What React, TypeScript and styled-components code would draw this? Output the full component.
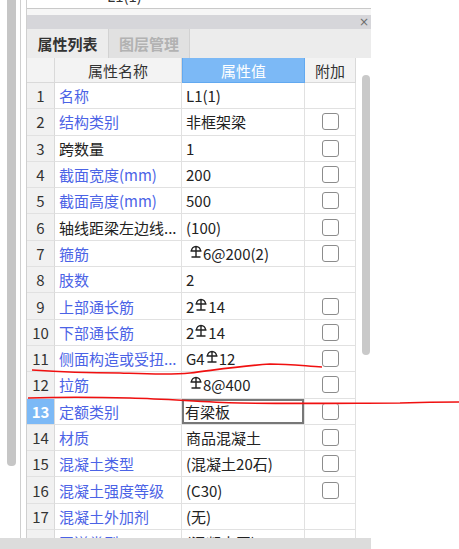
import React from 'react';
import styled, { createGlobalStyle } from 'styled-components';

const GlobalStyle = createGlobalStyle`
  html, body {
    margin: 0;
    padding: 0;
    background: #fff;
  }
  * {
    box-sizing: border-box;
  }
`;

const FONT = `"Microsoft YaHei", "Noto Sans CJK SC", "Noto Sans", sans-serif`;
const BLUE = '#4b63e6';
const GRID = '#e1e1e1';

const Root = styled.div`
  position: relative;
  width: 459px;
  height: 549px;
  overflow: hidden;
  display: flex;
  flex-direction: column;
  font-family: ${FONT};
  background: #fff;
`;

const Body = styled.div`
  display: flex;
  height: 538px;
`;

const LeftTrack = styled.div`
  width: 20px;
  padding-left: 7px;
`;

const LeftThumb = styled.div`
  width: 9px;
  height: 466px;
  background: #c6c6c6;
  border-radius: 0 0 4px 4px;
`;

const Divider = styled.div`
  width: 6px;
  border-left: 1px solid #cfcfcf;
`;

const Panel = styled.div`
  width: 345px;
  border-left: 1px solid #cfcfcf;
  display: flex;
  flex-direction: column;
  overflow: hidden;
`;

const TopBox = styled.div`
  height: 9px;
  background: #fff;
  border-bottom: 1px solid #c9c9c9;
  overflow: hidden;
  padding-left: 80px;
  font-size: 15px;
  color: #333;
  line-height: 15px;
`;

const TopText = styled.div`
  margin-top: -12px;
`;

const Spacer = styled.div`
  height: 6px;
  background: #f6f6f6;
`;

const PanelHeader = styled.div`
  height: 14px;
  background: #d6d6da;
  display: flex;
  justify-content: flex-end;
  align-items: center;
  padding-right: 2px;
`;

const CloseMark = styled.span`
  font-family: "DejaVu Sans", sans-serif;
  font-size: 12px;
  line-height: 12px;
  color: #6d6d6d;
`;

const TabBar = styled.div`
  height: 29px;
  background: #ececec;
  display: flex;
`;

const Tab = styled.div<{ $active?: boolean }>`
  width: ${(p) => (p.$active ? 81 : 82)}px;
  display: flex;
  align-items: center;
  justify-content: center;
  font-size: 15px;
  font-weight: 700;
  color: ${(p) => (p.$active ? '#333' : '#b2b2b2')};
  background: ${(p) => (p.$active ? '#ececec' : '#e1e1e1')};
  border-left: ${(p) => (p.$active ? 'none' : '1px solid #d2d2d2')};
  border-right: ${(p) => (p.$active ? 'none' : '1px solid #d2d2d2')};
`;

const TableArea = styled.div`
  display: flex;
  flex: 1;
  overflow: hidden;
`;

const Grid = styled.div`
  width: 329px;
  display: grid;
  grid-template-columns: 28px 127px 123px 51px;
  grid-template-rows: 25px;
  grid-auto-rows: 26.3px;
  align-content: start;
  background: #fff;
`;

const HeadCell = styled.div<{ $accent?: boolean }>`
  display: flex;
  align-items: center;
  justify-content: center;
  font-size: 15px;
  color: ${(p) => (p.$accent ? '#fff' : '#333')};
  background: ${(p) => (p.$accent ? '#7cb9f6' : '#f3f3f3')};
  border-right: 1px solid ${(p) => (p.$accent ? '#62a9f0' : '#d9d9d9')};
  border-bottom: 1px solid ${(p) => (p.$accent ? '#62a9f0' : '#d9d9d9')};
  border-left: ${(p) => (p.$accent ? '1px solid #62a9f0' : 'none')};
`;

const NumCell = styled.div<{ $selected?: boolean }>`
  display: flex;
  align-items: center;
  justify-content: center;
  font-size: 15px;
  font-weight: ${(p) => (p.$selected ? 700 : 400)};
  color: ${(p) => (p.$selected ? '#fff' : '#333')};
  background: ${(p) => (p.$selected ? '#7cb9f6' : '#f1f1f1')};
  border-right: 1px solid #d9d9d9;
  border-bottom: 1px solid ${GRID};
`;

const NameCell = styled.div<{ $blue?: boolean }>`
  display: flex;
  align-items: center;
  padding-left: 4px;
  font-size: 15px;
  color: ${(p) => (p.$blue ? BLUE : '#222')};
  white-space: nowrap;
  overflow: hidden;
  border-right: 1px solid ${GRID};
  border-bottom: 1px solid ${GRID};
`;

const ValueCell = styled.div<{ $editing?: boolean }>`
  display: flex;
  align-items: center;
  padding-left: ${(p) => (p.$editing ? 3 : 4)}px;
  font-size: 15px;
  color: #222;
  white-space: nowrap;
  border-right: 1px solid ${GRID};
  border-bottom: 1px solid ${GRID};
  ${(p) => (p.$editing ? 'box-shadow: inset 0 0 0 2px #777;' : '')}
`;

const ExtraCell = styled.div`
  display: flex;
  align-items: center;
  justify-content: center;
  border-right: 1px solid ${GRID};
  border-bottom: 1px solid ${GRID};
`;

const Check = styled.div`
  width: 17px;
  height: 17px;
  border: 1.5px solid #8c8c8c;
  border-radius: 3px;
  background: #fff;
`;

const ScrollCol = styled.div`
  width: 15px;
  padding: 17px 1px 0 6px;
  background: #fff;
`;

const ScrollThumb = styled.div`
  height: 280px;
  border-radius: 4px;
  background: #c9c9c9;
`;

const BottomBar = styled.div`
  width: 371px;
  height: 11px;
  background: #dcdcdc;
`;

const Annotation = styled.svg`
  position: absolute;
  left: 0;
  top: 0;
  pointer-events: none;
`;

const Glyph = styled.svg<{ $lead?: boolean }>`
  width: 12px;
  height: 13px;
  margin: ${(p) => (p.$lead ? '0 1px 0 4px' : '0 1px 0 1px')};
  position: relative;
  top: -2px;
`;

const Rebar = ({ lead }: { lead?: boolean }) => (
  <Glyph $lead={lead} viewBox="0 0 12 13">
    <path
      d="M1.5 6 A4.5 4.5 0 0 1 10.5 6 M0.5 6 H11.5 M6 1.5 V12.5 M1.5 12 H10.5"
      fill="none"
      stroke="#222"
      strokeWidth="1.4"
    />
  </Glyph>
);

interface Row {
  name: string;
  blue: boolean;
  value: string;
  check: boolean;
}

// '#' marks the rebar grade symbol
const rows: Row[] = [
  { name: '名称', blue: true, value: 'L1(1)', check: false },
  { name: '结构类别', blue: true, value: '非框架梁', check: true },
  { name: '跨数量', blue: false, value: '1', check: true },
  { name: '截面宽度(mm)', blue: true, value: '200', check: true },
  { name: '截面高度(mm)', blue: true, value: '500', check: true },
  { name: '轴线距梁左边线...', blue: false, value: '(100)', check: true },
  { name: '箍筋', blue: true, value: '#6@200(2)', check: true },
  { name: '肢数', blue: true, value: '2', check: false },
  { name: '上部通长筋', blue: true, value: '2#14', check: true },
  { name: '下部通长筋', blue: true, value: '2#14', check: true },
  { name: '侧面构造或受扭...', blue: true, value: 'G4#12', check: true },
  { name: '拉筋', blue: true, value: '#8@400', check: true },
  { name: '定额类别', blue: true, value: '有梁板', check: true },
  { name: '材质', blue: true, value: '商品混凝土', check: true },
  { name: '混凝土类型', blue: true, value: '(混凝土20石)', check: true },
  { name: '混凝土强度等级', blue: true, value: '(C30)', check: true },
  { name: '混凝土外加剂', blue: true, value: '(无)', check: false },
  { name: '泵送类型', blue: true, value: '(混凝土泵)', check: false },
];

const SELECTED = 13;

const renderValue = (value: string) => {
  const parts = value.split('#');
  return parts.map((part, i) => (
    <React.Fragment key={i}>
      {i > 0 && <Rebar lead={i === 1 && parts[0] === ''} />}
      {part}
    </React.Fragment>
  ));
};

export default function App() {
  return (
    <Root>
      <GlobalStyle />
      <Body>
        <LeftTrack>
          <LeftThumb />
        </LeftTrack>
        <Divider />
        <Panel>
          <TopBox>
            <TopText>L1(1)</TopText>
          </TopBox>
          <Spacer />
          <PanelHeader>
            <CloseMark>×</CloseMark>
          </PanelHeader>
          <TabBar>
            <Tab $active>属性列表</Tab>
            <Tab>图层管理</Tab>
          </TabBar>
          <TableArea>
            <Grid>
              <HeadCell />
              <HeadCell>属性名称</HeadCell>
              <HeadCell $accent>属性值</HeadCell>
              <HeadCell>附加</HeadCell>
              {rows.map((r, i) => {
                const n = i + 1;
                return (
                  <React.Fragment key={n}>
                    <NumCell $selected={n === SELECTED}>{n}</NumCell>
                    <NameCell $blue={r.blue}>{r.name}</NameCell>
                    <ValueCell $editing={n === SELECTED}>{renderValue(r.value)}</ValueCell>
                    <ExtraCell>{r.check && <Check />}</ExtraCell>
                  </React.Fragment>
                );
              })}
            </Grid>
            <ScrollCol>
              <ScrollThumb />
            </ScrollCol>
          </TableArea>
        </Panel>
      </Body>
      <BottomBar />
      <Annotation width="459" height="549" viewBox="0 0 459 549">
        <path
          d="M32 370 C60 372 90 373 120 373 C150 374 170 375 190 373 C215 370 240 366 270 364 C290 364 305 366 322 367"
          fill="none"
          stroke="#f01010"
          strokeWidth="1.6"
        />
        <path
          d="M28 398 C60 397 90 397 130 398 C170 399 200 402 240 403 C300 404 360 403 400 403 C430 402 445 402 459 402"
          fill="none"
          stroke="#f01010"
          strokeWidth="1.6"
        />
      </Annotation>
    </Root>
  );
}
